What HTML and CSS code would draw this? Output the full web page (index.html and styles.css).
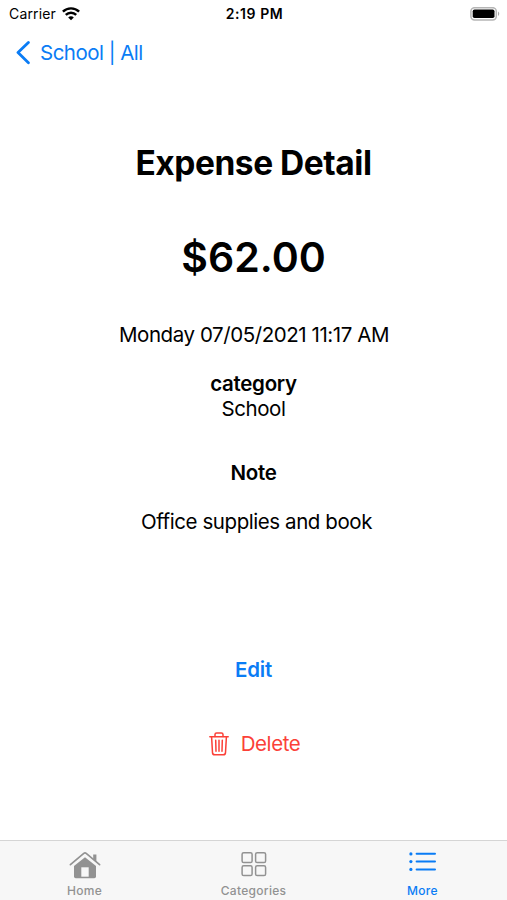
FILE: index.html
```html
<!DOCTYPE html>
<html lang="en">
<head>
  <meta charset="UTF-8" />
  <meta name="viewport" content="width=device-width, initial-scale=1" />
  <title>Expense Detail</title>
  <link rel="stylesheet" href="styles.css">
</head>
<body>
  <header class="status-bar">
    <div class="carrier">
      <span>Carrier</span>
      <svg class="wifi" width="18" height="14" viewBox="0 0 18 14" fill="none" stroke="#000" stroke-width="2.4">
        <path d="M0.9 4.7C5.4 0.2 12.6 0.2 17.1 4.7" />
        <path d="M3.8 7.9C6.7 5 11.3 5 14.2 7.9" />
        <path d="M9 13.2L6.2 10.4C7.8 8.9 10.2 8.9 11.8 10.4Z" fill="#000" stroke="none" />
      </svg>
    </div>
    <span class="time">2:19 PM</span>
    <svg class="battery" width="30" height="14" viewBox="0 0 30 14">
      <rect x="0.9" y="0.7" width="25.4" height="12.2" rx="3.6" fill="#fff" stroke="#b5b5b5" stroke-width="1.5" />
      <rect x="2.7" y="2.5" width="21.8" height="8.6" rx="1.8" fill="#000" />
      <path d="M28 4.6C29.7 5.3 29.7 8.3 28 9Z" fill="#aaa" />
    </svg>
  </header>

  <nav class="nav-bar">
    <a class="back">
      <svg width="14" height="24" viewBox="0 0 14 24" fill="none" stroke="currentColor" stroke-width="2.8" stroke-linecap="round" stroke-linejoin="round">
        <path d="M12.4 1.5L2 11.6L12.4 21.7" />
      </svg>
      <span>School | All</span>
    </a>
  </nav>

  <main class="detail">
    <h1>Expense Detail</h1>
    <p class="amount">$62.00</p>
    <p class="date">Monday 07/05/2021 11:17 AM</p>
    <h2 class="category">category</h2>
    <p class="category-name">School</p>
    <h2 class="note">Note</h2>
    <p class="note-text">Office supplies and book</p>
    <a class="edit">Edit</a>
    <a class="delete">
      <svg width="20" height="24" viewBox="0 0 20 24" fill="none" stroke="currentColor" stroke-width="1.5" stroke-linecap="round" stroke-linejoin="round">
        <path d="M0.8 4.8H19.2" />
        <path d="M6 4.6V2.6Q6 1 7.6 1H12.4Q14 1 14 2.6V4.6" />
        <path d="M2.6 4.8L3.5 20.6Q3.6 22.8 5.8 22.8H14.2Q16.4 22.8 16.5 20.6L17.4 4.8" />
        <path d="M6.7 8.3L7 19.3M10 8.3V19.3M13.3 8.3L13 19.3" />
      </svg>
      <span>Delete</span>
    </a>
  </main>

  <footer class="tab-bar">
    <a class="tab">
      <svg width="32" height="30" viewBox="0 0 32 30" fill="none">
        <path d="M16 8.2L27 17V27.6Q27 29.3 25.3 29.3H6.7Q5 29.3 5 27.6V17Z" fill="#929292" />
        <rect x="12.3" y="18.3" width="7.4" height="9.4" fill="#f7f7f7" />
        <path d="M1.4 15.6L14.8 4.3Q16 3.3 17.2 4.3L30.6 15.6" stroke="#929292" stroke-width="1.7" stroke-linecap="round" />
        <path d="M24.2 5.6H27.4V12.8L24.2 10Z" fill="#929292" />
      </svg>
      <span>Home</span>
    </a>
    <a class="tab">
      <svg width="26" height="30" viewBox="0 0 26 30" fill="none" stroke="#929292" stroke-width="1.5">
        <rect x="1.1" y="3.7" width="10" height="9.8" rx="1.6" />
        <rect x="14.6" y="3.7" width="10" height="9.8" rx="1.6" />
        <rect x="1.1" y="16.8" width="10" height="9.8" rx="1.6" />
        <rect x="14.6" y="16.8" width="10" height="9.8" rx="1.6" />
      </svg>
      <span>Categories</span>
    </a>
    <a class="tab active">
      <svg width="28" height="30" viewBox="0 0 28 30" fill="none" stroke="currentColor" stroke-width="2" stroke-linecap="round">
        <path d="M7.6 4.8H26M7.6 12.6H26M7.6 20.4H26" />
        <g fill="currentColor" stroke="none">
          <circle cx="1.9" cy="4.9" r="1.6" />
          <circle cx="1.9" cy="12.6" r="1.6" />
          <circle cx="1.9" cy="20.4" r="1.6" />
        </g>
      </svg>
      <span>More</span>
    </a>
  </footer>
</body>
</html>
```

FILE: styles.css
```css
* {
  box-sizing: border-box;
}

body {
  margin: 0;
  height: 100vh;
  display: flex;
  flex-direction: column;
  background: #fff;
  color: #000;
  font-family: Inter, "Liberation Sans", sans-serif;
  font-size: 20.5px;
  line-height: 25px;
  letter-spacing: -0.43px;
}

h1, h2, p {
  margin: 0;
}

svg {
  display: block;
}

.status-bar {
  display: grid;
  grid-template-columns: 1fr auto 1fr;
  align-items: center;
  height: 27px;
  padding: 0 7px 0 9px;
  font-size: 14px;
  letter-spacing: 0.15px;
}

.carrier {
  display: flex;
  align-items: center;
  gap: 6px;
}

.time {
  font-weight: 600;
  letter-spacing: 0.6px;
}

.battery {
  justify-self: end;
}

.nav-bar {
  height: 50px;
  padding: 13px 16px;
}

.back {
  display: flex;
  align-items: center;
  gap: 10px;
  color: #0a7cf5;
  letter-spacing: -0.52px;
}

.detail {
  flex: 1;
  display: flex;
  flex-direction: column;
  align-items: center;
  padding-top: 66px;
}

h1 {
  font-size: 33.5px;
  line-height: 41px;
  font-weight: 700;
  letter-spacing: -0.46px;
}

h2 {
  font-size: 20.5px;
  font-weight: 600;
  letter-spacing: -0.3px;
}

.amount {
  margin-top: 49px;
  font-size: 41px;
  line-height: 49px;
  font-weight: 600;
  letter-spacing: 0;
}

.date {
  margin: 40px 0 0 1px;
}

.category {
  margin-top: 24px;
}

.note {
  margin-top: 39px;
}

.note-text {
  margin: 24px 0 0 6px;
}

.edit {
  margin-top: 123px;
  color: #0a7cf5;
  font-weight: 600;
  letter-spacing: -0.2px;
}

.delete {
  display: flex;
  align-items: center;
  gap: 12px;
  margin: 49px 0 0 2px;
  color: #fb4038;
}

.tab-bar {
  display: grid;
  grid-template-columns: repeat(3, 1fr);
  height: 60px;
  padding-top: 8px;
  background: #f7f7f7;
  border-top: 1px solid #d5d5d5;
}

.tab {
  display: flex;
  flex-direction: column;
  align-items: center;
  color: #929292;
  font-size: 12px;
  line-height: 24px;
  font-weight: 500;
  letter-spacing: 0.3px;
}

.tab.active {
  color: #0a7cf5;
}
```
